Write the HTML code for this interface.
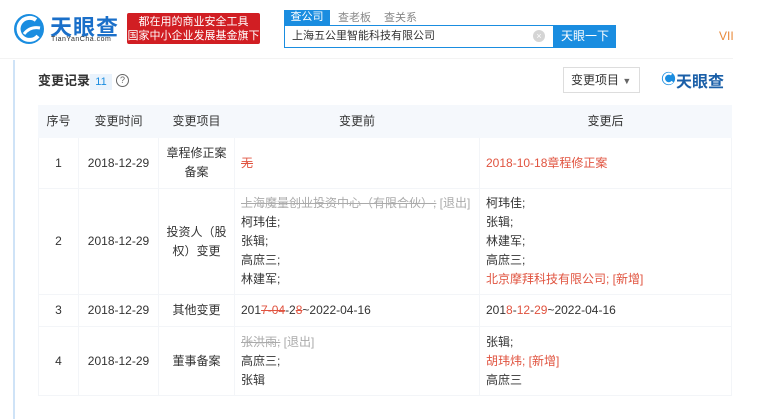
<!DOCTYPE html>
<html><head><meta charset="utf-8"><style>
*{margin:0;padding:0;box-sizing:border-box}
body{width:757px;height:419px;background:#fff;font-family:"Liberation Sans","Noto Sans CJK SC",sans-serif;font-size:12px;color:#333;position:relative;overflow:hidden}
.a{position:absolute}
table{position:absolute;left:38px;top:105px;width:694px;border-collapse:collapse}
td,th{border:1px solid #f3f5f8;font-weight:normal;font-size:12px;line-height:19px;vertical-align:middle}
th{background:#f5f8fc;height:32px;color:#333;border-color:#f5f8fc}
td.c{text-align:center}
td.l{padding:0 6px}
.r{color:#e0533f}
.g{color:#aaa}
.s{text-decoration:line-through;color:#aaa}
.sr{text-decoration:line-through;color:#e0533f}
</style></head><body>
<svg class="a" style="left:12px;top:12px" width="34" height="34" viewBox="0 0 34 34"><circle cx="17" cy="17" r="15" fill="#1a8de0"/><path d="M24 8 A11 11 0 1 0 26 24" stroke="#fff" stroke-width="4" fill="none"/><path d="M12 22 q6-8 16-6" stroke="#fff" stroke-width="3" fill="none"/></svg>
<div class="a" style="left:50px;top:10px;font-size:22px;font-weight:bold;color:#1a6fc9;letter-spacing:1px">天眼查</div>
<div class="a" style="left:51px;top:36px;font-size:7px;color:#333;letter-spacing:.5px">TianYanCha.com</div>
<div class="a" style="left:127px;top:13px;width:133px;height:31px;background:#d11e23;border-radius:2px;color:#fff;font-size:11px;line-height:14px;text-align:center;padding-top:2px">都在用的商业安全工具<br>国家中小企业发展基金旗下</div>
<div class="a" style="left:284px;top:10px;width:46px;height:15px;background:#1a8de0;color:#fff;font-size:11px;text-align:center;line-height:15px">查公司</div>
<div class="a" style="left:338px;top:9px;font-size:11px;color:#888">查老板</div>
<div class="a" style="left:384px;top:9px;font-size:11px;color:#888">查关系</div>
<div class="a" style="left:284px;top:25px;width:270px;height:23px;border:1px solid #1a8de0;background:#fff;font-size:11px;line-height:21px;padding-left:7px">上海五公里智能科技有限公司</div>
<div class="a" style="left:533px;top:30px;width:12px;height:12px;border-radius:50%;background:#d5d5d5;color:#fff;font-size:9px;line-height:12px;text-align:center">×</div>
<div class="a" style="left:554px;top:25px;width:62px;height:23px;background:#1a8de0;color:#fff;font-size:12px;line-height:23px;padding-left:7px">天眼一下</div>
<div class="a" style="left:719px;top:29px;font-size:12px;color:#e8893a">VII</div>
<div class="a" style="left:0;top:58px;width:733px;height:1px;background:#f3f3f3"></div>
<div class="a" style="left:13px;top:60px;width:2px;height:359px;background:#cfe3f7"></div>
<div class="a" style="left:38px;top:73px;font-size:13px;font-weight:bold;color:#333;line-height:16px">变更记录</div>
<div class="a" style="left:90px;top:74px;width:22px;height:16px;background:#eaf3fc;color:#1a8de0;font-size:11px;text-align:center;line-height:16px">11</div>
<div class="a" style="left:116px;top:74px;width:13px;height:13px;border:1px solid #666;border-radius:50%;font-size:9px;text-align:center;line-height:11px;color:#666">?</div>
<div class="a" style="left:563px;top:67px;width:77px;height:26px;border:1px solid #ddd;font-size:12px;line-height:24px;padding-left:7px;color:#333">变更项目 <span style="font-size:9px;color:#666">▼</span></div>
<svg class="a" style="left:661px;top:71px" width="15" height="15" viewBox="0 0 34 34"><circle cx="17" cy="17" r="15" fill="#1a8de0"/><path d="M24 8 A11 11 0 1 0 26 24" stroke="#fff" stroke-width="5" fill="none"/></svg>
<div class="a" style="left:676px;top:68px;font-size:16px;font-weight:bold;color:#1a5fa8">天眼查</div>
<table>
<tr><th style="width:40px">序号</th><th style="width:80px">变更时间</th><th style="width:76px">变更项目</th><th style="width:245px">变更前</th><th>变更后</th></tr>
<tr style="height:51px"><td class="c">1</td><td class="c">2018-12-29</td><td class="c">章程修正案<br>备案</td><td class="l"><span class="sr">无</span></td><td class="l r">2018-10-18章程修正案</td></tr>
<tr style="height:106px"><td class="c">2</td><td class="c">2018-12-29</td><td class="c">投资人（股<br>权）变更</td><td class="l"><span class="s">上海魔量创业投资中心（有限合伙）;</span><span class="g"> [退出]</span><br>柯玮佳;<br>张辑;<br>高庶三;<br>林建军;</td><td class="l">柯玮佳;<br>张辑;<br>林建军;<br>高庶三;<br><span class="r">北京摩拜科技有限公司; [新增]</span></td></tr>
<tr style="height:32px"><td class="c">3</td><td class="c">2018-12-29</td><td class="c">其他变更</td><td class="l">201<span class="sr">7-04</span>-2<span class="sr">8</span>~2022-04-16</td><td class="l">201<span class="r">8</span>-<span class="r">12</span>-<span class="r">29</span>~2022-04-16</td></tr>
<tr style="height:69px"><td class="c">4</td><td class="c">2018-12-29</td><td class="c">董事备案</td><td class="l"><span class="s">张洪雨;</span><span class="g"> [退出]</span><br>高庶三;<br>张辑</td><td class="l">张辑;<br><span class="r">胡玮炜; [新增]</span><br>高庶三</td></tr>
</table>
</body></html>
